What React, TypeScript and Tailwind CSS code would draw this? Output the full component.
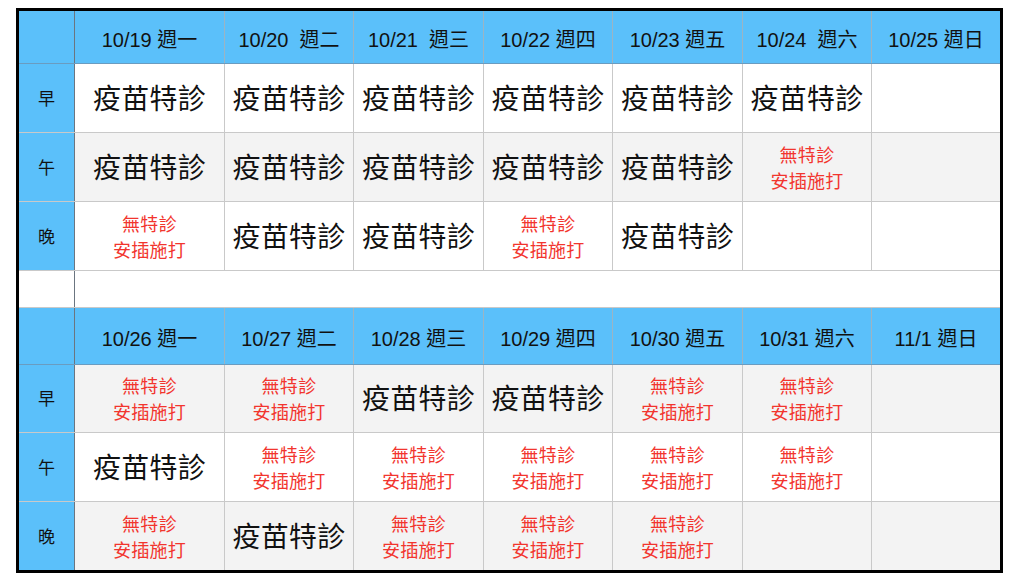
import React from 'react';

type Cell = 'v' | 'n' | '';

interface Week {
    days: string[];
    rows: { label: string; cells: Cell[] }[];
    headerH: string;
    rowH: string[];
    zebra: string[];
}

const font = { fontFamily: '"Liberation Sans", "Noto Sans CJK TC", sans-serif' };

const widths = ['w-[150px]', 'w-[129px]', 'w-[130px]', 'w-[129px]', 'w-[130px]', 'w-[129px]', 'w-[128px]'];

const weeks: Week[] = [
    {
        days: ['10/19 週一', '10/20  週二', '10/21  週三', '10/22 週四', '10/23 週五', '10/24  週六', '10/25 週日'],
        rows: [
            { label: '早', cells: ['v', 'v', 'v', 'v', 'v', 'v', ''] },
            { label: '午', cells: ['v', 'v', 'v', 'v', 'v', 'n', ''] },
            { label: '晚', cells: ['n', 'v', 'v', 'n', 'v', '', ''] },
        ],
        headerH: 'h-[53px]',
        rowH: ['h-[69px]', 'h-[69px]', 'h-[69px]'],
        zebra: ['bg-white', 'bg-[#f3f3f3]', 'bg-white'],
    },
    {
        days: ['10/26 週一', '10/27 週二', '10/28 週三', '10/29 週四', '10/30 週五', '10/31 週六', '11/1 週日'],
        rows: [
            { label: '早', cells: ['n', 'n', 'v', 'v', 'n', 'n', ''] },
            { label: '午', cells: ['v', 'n', 'n', 'n', 'n', 'n', ''] },
            { label: '晚', cells: ['n', 'v', 'n', 'n', 'n', '', ''] },
        ],
        headerH: 'h-[57px]',
        rowH: ['h-[68px]', 'h-[69px]', 'h-[68px]'],
        zebra: ['bg-[#f3f3f3]', 'bg-white', 'bg-[#f3f3f3]'],
    },
];

function Content({ type }: { type: Cell }) {
    if (type === 'v') {
        return <span className="text-[28px] text-[#111] tracking-[0.3px]">疫苗特診</span>;
    }
    if (type === 'n') {
        return (
            <div className="flex flex-col items-center text-[18px] leading-[26px] text-[#f2352e] tracking-[0.3px]">
                <span>無特診</span>
                <span>安插施打</span>
            </div>
        );
    }
    return null;
}

function WeekBlock({ week, last }: { week: Week; last: boolean }) {
    return (
        <div className="flex flex-col">
            {/* header */}
            <div className={`flex ${week.headerH} bg-[#5bc0fa] border-b border-[#6a9cc0]`}>
                <div className="w-[56px] border-r border-[#6b7580]" />
                {week.days.map((d, i) => (
                    <div
                        key={d}
                        className={`${widths[i]} flex items-center justify-center pt-[5px] whitespace-pre text-[20px] text-[#111] ${
                            i < 6 ? 'border-r border-[#9bb4c4]' : ''
                        }`}
                    >
                        {d}
                    </div>
                ))}
            </div>

            {week.rows.map((row, r) => (
                <div
                    key={row.label}
                    className={`flex ${week.rowH[r]} ${week.zebra[r]} ${
                        last && r === 2 ? '' : 'border-b border-[#c9c9c9]'
                    }`}
                >
                    <div className="w-[56px] bg-[#5bc0fa] border-r border-[#6b7580] flex items-center justify-center pt-[3px] text-[17px] text-[#111]">
                        {row.label}
                    </div>
                    {row.cells.map((c, i) => (
                        <div
                            key={i}
                            className={`${widths[i]} flex items-center justify-center pt-[3px] ${
                                i < 6 ? 'border-r border-[#c9c9c9]' : ''
                            }`}
                        >
                            <Content type={c} />
                        </div>
                    ))}
                </div>
            ))}
        </div>
    );
}

export default function App() {
    return (
        <div className="w-[1024px] h-[580px] bg-white pt-[8px] pl-[16px]" style={font}>
            <div className="w-[987px] border-[3px] border-black bg-white flex flex-col">
                <WeekBlock week={weeks[0]} last={false} />
                {/* gap between the two weeks */}
                <div className="flex h-[37px] border-b border-[#c9c9c9]">
                    <div className="w-[56px] border-r border-[#6b7580]" />
                    <div className="flex-1" />
                </div>
                <WeekBlock week={weeks[1]} last={true} />
            </div>
        </div>
    );
}
